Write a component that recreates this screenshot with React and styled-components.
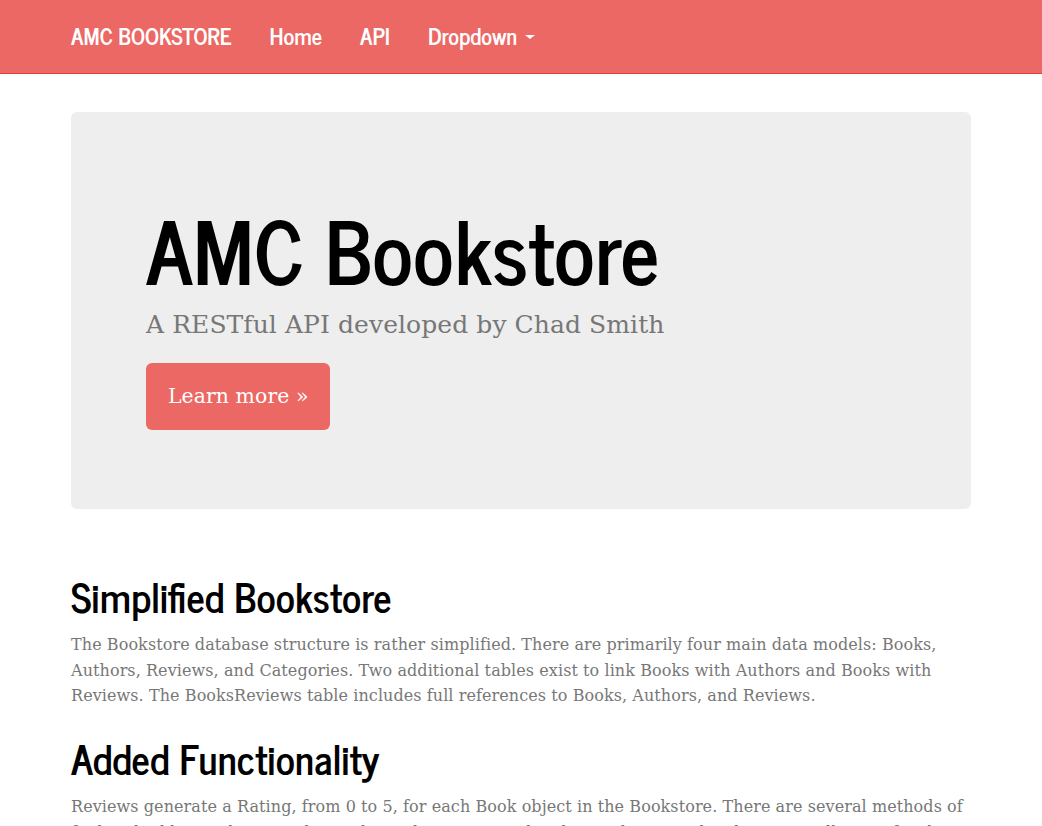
import styled, { createGlobalStyle } from 'styled-components';

const HEAD_FONT = `"News Cycle", "Liberation Sans Narrow", "DejaVu Sans Condensed", "Roboto", sans-serif`;
const BODY_FONT = `Georgia, "DejaVu Serif", "Liberation Serif", serif`;

const GlobalStyle = createGlobalStyle`
  html, body {
    margin: 0;
    padding: 0;
    background: #ffffff;
  }

  body {
    font-family: ${BODY_FONT};
    font-size: 16px;
    letter-spacing: 0.08px;
    line-height: 25.7px;
    color: #777777;
  }

  * {
    box-sizing: border-box;
  }
`;

const Navbar = styled.nav`
  height: 74px;
  background-color: #eb6864;
  border-bottom: 1px solid #e53c37;
`;

const NavInner = styled.div`
  display: flex;
  align-items: center;
  gap: 38px;

  width: 900px;
  height: 100%;
  margin: 0 auto;
  padding-bottom: 1px;
`;

const NavLink = styled.a`
  display: flex;
  align-items: center;
  gap: 8px;

  color: #ffffff;
  font-family: ${HEAD_FONT};
  font-size: 22.5px;
  font-weight: 700;
  letter-spacing: 0;
  text-decoration: none;
  cursor: pointer;
`;

const Caret = styled.span`
  width: 0;
  height: 0;
  margin-top: 2px;

  border-top: 4px solid #ffffff;
  border-left: 5px solid transparent;
  border-right: 5px solid transparent;
`;

const Container = styled.main`
  width: 900px;
  margin: 38px auto 0;
`;

const Jumbotron = styled.section`
  display: flex;
  flex-direction: column;
  align-items: flex-start;

  height: 397px;
  padding: 94px 75px 0;

  background-color: #eeeeee;
  border-radius: 6px;
`;

const Title = styled.h1`
  margin: 0;

  color: #000000;
  font-family: ${HEAD_FONT};
  font-size: 85px;
  font-weight: 700;
  letter-spacing: 0;
  line-height: 1;
`;

const Lead = styled.p`
  margin: 19px 0 0;

  color: #777777;
  font-size: 25px;
  line-height: 1.2;
`;

const Button = styled.a`
  display: flex;
  align-items: center;

  height: 67px;
  margin-top: 23px;
  padding: 0 22px;

  background-color: #eb6864;
  border-radius: 6px;
  color: #ffffff;

  font-size: 20.4px;
  text-decoration: none;
  cursor: pointer;
`;

const Section = styled.section`
  margin-top: ${({ $first }) => ($first ? '65px' : '27px')};
`;

const Heading = styled.h2`
  margin: 0 0 14px;

  color: #000000;
  font-family: ${HEAD_FONT};
  font-size: 40px;
  font-weight: 700;
  letter-spacing: 0;
  line-height: 1.1;
`;

const Text = styled.p`
  margin: 0;
`;

const sections = [
  {
    title: 'Simplified Bookstore',
    text: 'The Bookstore database structure is rather simplified. There are primarily four main data models: Books, Authors, Reviews, and Categories. Two additional tables exist to link Books with Authors and Books with Reviews. The BooksReviews table includes full references to Books, Authors, and Reviews.',
  },
  {
    title: 'Added Functionality',
    text: 'Reviews generate a Rating, from 0 to 5, for each Book object in the Bookstore. There are several methods of finding highly rated items. The BooksAPI has a toprated endpoint that provides the same collection for the Books resource, sorted by their average rating.',
  },
];

const App = () => (
  <>
    <GlobalStyle />
    <Navbar>
      <NavInner>
        <NavLink>AMC BOOKSTORE</NavLink>
        <NavLink>Home</NavLink>
        <NavLink>API</NavLink>
        <NavLink>
          Dropdown
          <Caret />
        </NavLink>
      </NavInner>
    </Navbar>
    <Container>
      <Jumbotron>
        <Title>AMC Bookstore</Title>
        <Lead>A RESTful API developed by Chad Smith</Lead>
        <Button>Learn more »</Button>
      </Jumbotron>
      {sections.map((section, idx) => (
        <Section key={section.title} $first={idx === 0}>
          <Heading>{section.title}</Heading>
          <Text>{section.text}</Text>
        </Section>
      ))}
    </Container>
  </>
);

export default App;
